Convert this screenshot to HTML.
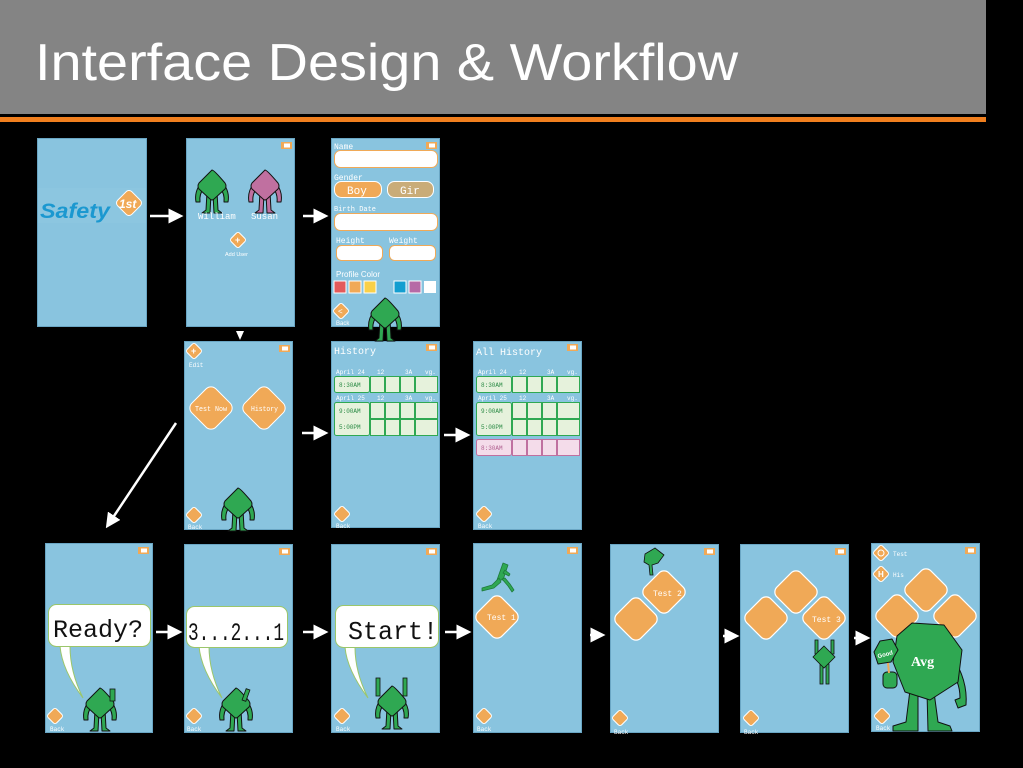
<!DOCTYPE html>
<html><head><meta charset="utf-8"><style>
html,body{margin:0;padding:0;background:#000;width:1023px;height:768px;overflow:hidden}
svg{display:block}
.m{font-family:"Liberation Mono",monospace;fill:#fff}
.s{font-family:"Liberation Sans",sans-serif}
</style></head><body>
<svg width="1023" height="768" viewBox="0 0 1023 768" xmlns="http://www.w3.org/2000/svg">
<defs>
<g id="bat"><rect x="0" y="0" width="11" height="7" fill="#f0a957"/><rect x="3" y="1.5" width="6" height="4" fill="#fff"/></g>
<g id="dia"><rect x="-6" y="-6" width="12" height="12" rx="2.5" transform="rotate(45)" fill="#f0a957" stroke="#fff" stroke-width="1"/></g>
<g id="mon" stroke="#111" stroke-width="1" stroke-linejoin="round">
 <path d="M-5,6 L-6,24 L-10,27 L-2,27 L-1,8Z M5,6 L6,24 L10,27 L2,27 L1,8Z" fill="#2fa852"/>
 <path d="M-11,-3 Q-18,6 -16,16 L-12,16 Q-13,8 -8,2Z M11,-3 Q18,6 16,16 L12,16 Q13,8 8,2Z" fill="#2fa852"/>
 <path d="M0,-16 Q2,-16 13,-3 Q15,0 13,3 L2,13 Q0,15 -2,13 L-13,3 Q-15,0 -13,-3 L-2,-14Z" fill="#2fa852"/>
</g>
<g id="monp" stroke="#111" stroke-width="1" stroke-linejoin="round">
 <path d="M-5,6 L-6,24 L-10,27 L-2,27 L-1,8Z M5,6 L6,24 L10,27 L2,27 L1,8Z" fill="#c070a0"/>
 <path d="M-11,-3 Q-18,6 -16,16 L-12,16 Q-13,8 -8,2Z M11,-3 Q18,6 16,16 L12,16 Q13,8 8,2Z" fill="#c070a0"/>
 <path d="M0,-16 Q2,-16 13,-3 Q15,0 13,3 L2,13 Q0,15 -2,13 L-13,3 Q-15,0 -13,-3 L-2,-14Z" fill="#c070a0"/>
</g>
<g id="big"><rect x="-17" y="-17" width="34" height="34" rx="7" transform="rotate(45)" fill="#f0a957" stroke="#fff" stroke-width="1.2"/></g>
<marker id="ah" markerWidth="6" markerHeight="6" refX="3" refY="3" orient="auto"><path d="M0,0 L6,3 L0,6Z" fill="#fff"/></marker>
</defs>

<rect x="0" y="0" width="986" height="114" fill="#848484"/>
<rect x="0" y="117" width="986" height="5" fill="#f07f1e"/>
<text x="35" y="80" font-family="Liberation Sans,sans-serif" font-size="52" fill="#fff" textLength="703" lengthAdjust="spacingAndGlyphs">Interface Design &amp; Workflow</text>

<g fill="#89c4df" stroke="#6aa6c4" stroke-width="1">
<rect x="37.5" y="138.5" width="109" height="188"/>
<rect x="186.5" y="138.5" width="108" height="188"/>
<rect x="331.5" y="138.5" width="108" height="188"/>
<rect x="184.5" y="341.5" width="108" height="188"/>
<rect x="331.5" y="341.5" width="108" height="186"/>
<rect x="473.5" y="341.5" width="108" height="188"/>
<rect x="45.5" y="543.5" width="107" height="189"/>
<rect x="184.5" y="544.5" width="108" height="188"/>
<rect x="331.5" y="544.5" width="108" height="188"/>
<rect x="473.5" y="543.5" width="108" height="189"/>
<rect x="610.5" y="544.5" width="108" height="188"/>
<rect x="740.5" y="544.5" width="108" height="188"/>
<rect x="871.5" y="543.5" width="108" height="188"/>
</g>
<use href="#bat" x="281" y="142"/><use href="#bat" x="426" y="142"/>
<use href="#bat" x="279" y="345"/><use href="#bat" x="426" y="344"/><use href="#bat" x="567" y="344"/>
<use href="#bat" x="138" y="547"/><use href="#bat" x="279" y="548"/><use href="#bat" x="426" y="548"/><use href="#bat" x="567" y="547"/><use href="#bat" x="704" y="548"/><use href="#bat" x="835" y="548"/><use href="#bat" x="965" y="547"/>

<g stroke="#fff" stroke-width="2.5" marker-end="url(#ah)">
<line x1="150" y1="216" x2="176" y2="216"/>
<line x1="303" y1="216" x2="321" y2="216"/>
<line x1="302" y1="433" x2="321" y2="433"/>
<line x1="444" y1="435" x2="463" y2="435"/>
<line x1="176" y1="423" x2="110" y2="522"/>
<line x1="156" y1="632" x2="175" y2="632"/>
<line x1="303" y1="632" x2="321" y2="632"/>
<line x1="445" y1="632" x2="464" y2="632"/>
<line x1="590" y1="635" x2="598" y2="635"/>
<line x1="723" y1="636" x2="732" y2="636"/>
<line x1="854" y1="638" x2="863" y2="638"/>
</g>
<path d="M236,331 L244,331 L240,340Z" fill="#fff"/>

<rect x="38" y="188" width="108" height="35" fill="#8cc6e0"/>
<text x="40" y="218" font-family="Liberation Sans,sans-serif" font-size="21" font-weight="bold" font-style="italic" fill="#1b98d0" textLength="70" lengthAdjust="spacingAndGlyphs">Safety</text>
<rect x="-10" y="-10" width="20" height="20" rx="4" transform="translate(129,203) rotate(45)" fill="#f0a957" stroke="#fff"/>
<text x="119" y="208" class="s" font-size="12" font-weight="bold" font-style="italic" fill="#fff">1st</text>

<use href="#mon" x="212" y="186"/><use href="#monp" x="265" y="186"/>
<text x="198" y="219" class="m" font-size="9">William</text>
<text x="251" y="219" class="m" font-size="9">Susan</text>
<use href="#dia" x="238" y="240"/><text x="235" y="243" class="s" font-size="9" fill="#fff" font-weight="bold">+</text>
<text x="225" y="256" class="s" font-size="5.5" fill="#fff">Add User</text>

<g class="m" font-size="8">
<text x="334" y="149">Name</text><text x="334" y="180">Gender</text><text x="334" y="211" font-size="7">Birth Date</text>
<text x="336" y="243">Height</text><text x="389" y="243">Weight</text>
</g>
<text x="336" y="277" class="s" font-size="8" fill="#fff">Profile Color</text>
<g fill="#fff" stroke="#f0a957" stroke-width="1">
<rect x="334.5" y="150.5" width="103" height="17" rx="6"/>
<rect x="334.5" y="213.5" width="103" height="17" rx="6"/>
<rect x="336.5" y="245.5" width="46" height="15" rx="5"/>
<rect x="389.5" y="245.5" width="46" height="15" rx="5"/>
</g>
<rect x="334.5" y="181.5" width="47" height="16" rx="7" fill="#f0a957" stroke="#fff"/>
<rect x="387.5" y="181.5" width="46" height="16" rx="7" fill="#c9ac78" stroke="#fff"/>
<text x="347" y="194" class="m" font-size="11">Boy</text><text x="400" y="194" class="m" font-size="11" fill="#eee">Gir</text>
<rect x="334" y="281" width="12" height="12" fill="#e35a5a" stroke="#fff"/>
<rect x="349" y="281" width="12" height="12" fill="#f0a957" stroke="#fff"/>
<rect x="364" y="281" width="12" height="12" fill="#f9d048" stroke="#fff"/>
<rect x="394" y="281" width="12" height="12" fill="#139ed0" stroke="#fff"/>
<rect x="409" y="281" width="12" height="12" fill="#b66aa6" stroke="#fff"/>
<rect x="424" y="281" width="12" height="12" fill="#fff"/>
<use href="#dia" x="341" y="311"/><text x="338" y="314" class="s" font-size="8" fill="#fff">&lt;</text>
<text x="336" y="325" class="s" font-size="6" fill="#fff">Back</text>
<use href="#mon" x="385" y="314"/>

<use href="#dia" x="194" y="351"/><text x="191" y="354" class="s" font-size="9" fill="#fff" font-weight="bold">+</text>
<text x="189" y="367" class="m" font-size="6">Edit</text>
<rect x="-17" y="-17" width="34" height="34" rx="7" transform="translate(211,408) rotate(45)" fill="#f0a957" stroke="#fff"/>
<rect x="-17" y="-17" width="34" height="34" rx="7" transform="translate(264,408) rotate(45)" fill="#f0a957" stroke="#fff"/>
<text x="195" y="411" class="m" font-size="7.5" textLength="32" lengthAdjust="spacingAndGlyphs">Test Now</text><text x="251" y="411" class="m" font-size="7.5" textLength="27" lengthAdjust="spacingAndGlyphs">History</text>
<use href="#mon" x="238" y="504"/>
<use href="#dia" x="194" y="515"/><text x="188" y="529" class="m" font-size="6">Back</text>

<g id="tbl">
<g class="m" font-size="6"><text x="336" y="374">April 24</text><text x="377" y="374">12</text><text x="405" y="374">3A</text><text x="425" y="374">vg.</text>
<text x="336" y="400">April 25</text><text x="377" y="400">12</text><text x="405" y="400">3A</text><text x="425" y="400">vg.</text></g>
<g fill="#e6f2dc" stroke="#2fa852" stroke-width="1">
<rect x="334.5" y="376.5" width="35" height="16" rx="2"/><rect x="370.5" y="376.5" width="14" height="16"/><rect x="385.5" y="376.5" width="14" height="16"/><rect x="400.5" y="376.5" width="14" height="16"/><rect x="415.5" y="376.5" width="22" height="16"/>
<rect x="334.5" y="402.5" width="35" height="33" rx="2"/>
<rect x="370.5" y="402.5" width="14" height="16"/><rect x="385.5" y="402.5" width="14" height="16"/><rect x="400.5" y="402.5" width="14" height="16"/><rect x="415.5" y="402.5" width="22" height="16"/>
<rect x="370.5" y="419.5" width="14" height="16"/><rect x="385.5" y="419.5" width="14" height="16"/><rect x="400.5" y="419.5" width="14" height="16"/><rect x="415.5" y="419.5" width="22" height="16"/>
</g>
<g font-family="Liberation Mono,monospace" font-size="6" fill="#2a8a44"><text x="339" y="387">8:30AM</text><text x="339" y="413">9:00AM</text><text x="339" y="429">5:00PM</text></g>
<use href="#dia" x="342" y="514"/><text x="336" y="528" class="m" font-size="6">Back</text>
</g>
<text x="334" y="354" class="m" font-size="10">History</text>
<use href="#tbl" x="142" y="0"/>
<text x="476" y="355" class="m" font-size="10">All History</text>
<g fill="#f4dcea" stroke="#c070a0" stroke-width="1">
<rect x="476.5" y="439.5" width="35" height="16" rx="2"/><rect x="512.5" y="439.5" width="14" height="16"/><rect x="527.5" y="439.5" width="14" height="16"/><rect x="542.5" y="439.5" width="14" height="16"/><rect x="557.5" y="439.5" width="22" height="16"/>
</g>
<text x="481" y="450" font-family="Liberation Mono,monospace" font-size="6" fill="#b06090">8:30AM</text>

<g fill="#fff" stroke="#9bc66a" stroke-width="1">
<path d="M60,646 Q62,670 83,698 Q70,672 70,646Z"/>
<rect x="48.5" y="604.5" width="102" height="42" rx="8"/>
<path d="M199,646 Q201,670 222,698 Q209,672 209,646Z"/>
<rect x="186.5" y="606.5" width="101" height="41" rx="8"/>
<path d="M345,647 Q347,670 368,698 Q355,672 355,647Z"/>
<rect x="335.5" y="605.5" width="103" height="42" rx="8"/>
</g>
<text x="53" y="637" font-family="Liberation Mono,monospace" font-size="25" fill="#111">Ready?</text>
<text x="188" y="640" font-family="Liberation Mono,monospace" font-size="25" fill="#111" textLength="96" lengthAdjust="spacingAndGlyphs">3...2...1</text>
<text x="348" y="639" font-family="Liberation Mono,monospace" font-size="26" fill="#111" textLength="90" lengthAdjust="spacingAndGlyphs">Start!</text>
<use href="#mon" x="100" y="704"/><use href="#mon" x="236" y="704"/><use href="#mon" x="392" y="702"/>
<g stroke="#111" stroke-width="0.8" fill="#2fa852">
<rect x="110" y="689" width="5" height="12"/><rect x="244" y="689" width="4" height="12" transform="rotate(20 246 695)"/>
<rect x="376" y="678" width="4" height="18"/><rect x="403" y="678" width="4" height="18"/>
</g>
<use href="#dia" x="55" y="716"/><text x="50" y="731" class="m" font-size="6">Back</text>
<use href="#dia" x="194" y="716"/><text x="187" y="731" class="m" font-size="6">Back</text>
<use href="#dia" x="342" y="716"/><text x="336" y="731" class="m" font-size="6">Back</text>
<use href="#dia" x="484" y="716"/><text x="477" y="731" class="m" font-size="6">Back</text>
<use href="#dia" x="620" y="718"/><text x="614" y="734" class="m" font-size="6">Back</text>
<use href="#dia" x="751" y="718"/><text x="744" y="734" class="m" font-size="6">Back</text>

<g stroke="#1e7a3a" stroke-width="0.8" fill="#2fa852" stroke-linejoin="round">
<path d="M503,563 L508,565 L503,580 L497,580Z"/>
<path d="M499,578 L492,585 L482,588 L482,591 L494,588 L501,582Z"/>
<path d="M502,579 L508,586 L512,592 L514,590 L510,584 L505,578Z"/>
<path d="M505,570 L510,574 L509,576 L503,573Z"/>
</g>
<use href="#big" x="497" y="617"/>
<text x="487" y="620" class="m" font-size="8">Test 1</text>

<use href="#big" x="636" y="619"/><use href="#big" x="664" y="592"/>
<text x="653" y="596" class="m" font-size="8">Test 2</text>
<path d="M645,554 L655,548 L664,555 L658,563 L652,565 L653,575 L650,575 L649,565 L644,562Z" fill="#2fa852" stroke="#111" stroke-width="0.8"/>

<use href="#big" x="796" y="592"/><use href="#big" x="766" y="618"/><use href="#big" x="824" y="618"/>
<text x="812" y="622" class="m" font-size="8">Test 3</text>
<g stroke="#111" stroke-width="0.8" fill="#2fa852">
<rect x="815" y="640" width="3" height="14"/><rect x="831" y="640" width="3" height="14"/>
<rect x="820" y="664" width="3" height="20"/><rect x="826" y="664" width="3" height="20"/>
<path d="M824,646 L835,657 L824,668 L813,657Z"/>
</g>

<use href="#big" x="926" y="590"/><use href="#big" x="897" y="616"/><use href="#big" x="955" y="616"/>
<use href="#dia" x="881" y="553"/><circle cx="881" cy="553" r="3" fill="none" stroke="#fff"/><text x="893" y="556" class="m" font-size="6">Test</text>
<use href="#dia" x="881" y="574"/><text x="878" y="577" class="s" font-size="8" fill="#fff" font-weight="bold">H</text><text x="893" y="577" class="m" font-size="6">His</text>
<g stroke="#111" stroke-width="1" fill="#2fa852" stroke-linejoin="round">
<path d="M910,690 L906,722 L893,726 L893,731 L918,731 L918,692Z M934,692 L938,722 L950,726 L952,731 L948,731 L928,731 L927,692Z"/>
<path d="M952,656 Q968,680 966,705 L958,708 L955,700 L960,698 Q960,680 948,668Z"/>
<path d="M912,623 L944,625 L962,650 L958,682 L930,700 L905,692 L893,662 L897,636Z"/>
<rect x="883" y="672" width="14" height="16" rx="4"/>
<path d="M880,641 L892,639 L898,650 L891,662 L878,664 L874,652Z"/>
</g>
<line x1="888" y1="663" x2="889" y2="673" stroke="#f0a957" stroke-width="2"/>
<text x="911" y="666" font-family="Liberation Serif,serif" font-size="14" font-weight="bold" fill="#fff">Avg</text>
<text x="877" y="656" class="s" font-size="6" font-weight="bold" fill="#fff" transform="rotate(-15 886 653)">Good</text>
<use href="#dia" x="882" y="716"/><text x="876" y="730" class="m" font-size="6">Back</text>
</svg>
</body></html>
